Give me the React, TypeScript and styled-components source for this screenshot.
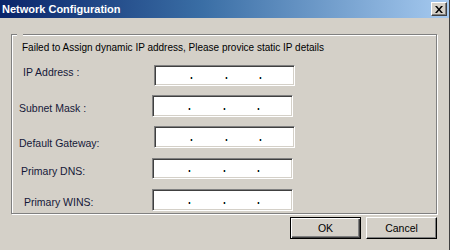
import React from 'react';
import styled, { createGlobalStyle } from 'styled-components';

const GlobalStyle = createGlobalStyle`
  html, body {
    margin: 0;
    padding: 0;
    background: #d4d0c8;
  }
  body {
    font-family: "Liberation Sans", Arial, sans-serif;
    font-size: 10.5px;
    color: #000;
  }
`;

// labelX / boxX are measured from the group box content edge
const fields = [
  { label: 'IP Address :', labelX: 11, labelY: 1, boxX: 142, gap: 11, height: 21 },
  { label: 'Subnet Mask :', labelX: 7, labelY: 7, boxX: 140, gap: 9, height: 22 },
  { label: 'Default Gateway:', labelX: 7, labelY: 11, boxX: 142, gap: 9, height: 22 },
  { label: 'Primary DNS:', labelX: 9, labelY: 7, boxX: 140, gap: 8, height: 21 },
  { label: 'Primary WINS:', labelX: 12, labelY: 7, boxX: 140, gap: 10, height: 22 },
];

export default function App() {
  return (
    <>
      <GlobalStyle />
      <Window>
        <TitleBar>
          <Title>Network Configuration</Title>
          <CloseButton>
            <svg width="8" height="7" viewBox="0 0 8 7">
              <path d="M0 0h2l2 2.5L6 0h2L5 3.5 8 7H6L4 4.5 2 7H0l3-3.5z" fill="#000" />
            </svg>
          </CloseButton>
        </TitleBar>
        <Body>
          <GroupBox>
            <LegendGap />
            <Message>Failed to Assign dynamic IP address, Please provice static IP details</Message>
            {fields.map((f) => (
              <FieldRow key={f.label} $gap={f.gap}>
                <Label $x={f.labelX} $y={f.labelY} $w={f.boxX}>
                  {f.label}
                </Label>
                <IpBox $h={f.height}>
                  <Octet />
                  <Dot />
                  <Octet />
                  <Dot />
                  <Octet />
                  <Dot />
                  <Octet />
                </IpBox>
              </FieldRow>
            ))}
          </GroupBox>
          <ButtonRow>
            <Button $default>OK</Button>
            <Button>Cancel</Button>
          </ButtonRow>
        </Body>
      </Window>
    </>
  );
}

const Window = styled.div`
  width: 450px;
  height: 250px;
  display: flex;
  flex-direction: column;
  background: #d4d0c8;
  box-sizing: border-box;
  border-right: 1px solid #404040;
  overflow: hidden;
`;

const TitleBar = styled.div`
  height: 18px;
  display: flex;
  align-items: center;
  justify-content: space-between;
  padding: 0 2px;
  background: linear-gradient(to right, #0a246a 0%, #3a6ea5 45%, #a6caf0 100%);
`;

const Title = styled.div`
  color: #fff;
  font-weight: bold;
  font-size: 11px;
  line-height: 18px;
`;

const CloseButton = styled.div`
  width: 16px;
  height: 14px;
  box-sizing: border-box;
  display: flex;
  align-items: center;
  justify-content: center;
  background: #d4d0c8;
  border-top: 1px solid #fff;
  border-left: 1px solid #fff;
  border-right: 1px solid #404040;
  border-bottom: 1px solid #404040;
  box-shadow: inset -1px -1px 0 #808080;
`;

const Body = styled.div`
  flex: 1;
  display: flex;
  flex-direction: column;
  padding: 16px 12px 0 11px;
`;

const GroupBox = styled.div`
  position: relative;
  height: 180px;
  box-sizing: border-box;
  border: 1px solid #808080;
  box-shadow: inset 1px 1px 0 #fff, 1px 1px 0 #fff;
  padding-top: 6px;
  display: flex;
  flex-direction: column;
`;

const LegendGap = styled.div`
  position: absolute;
  top: -1px;
  left: 5px;
  width: 6px;
  height: 2px;
  background: #d4d0c8;
`;

const Message = styled.div`
  font-size: 10px;
  line-height: 13px;
  padding-left: 10px;
`;

const FieldRow = styled.div<{ $gap: number }>`
  display: flex;
  align-items: flex-start;
  margin-top: ${(p) => p.$gap}px;
`;

const Label = styled.div<{ $x: number; $y: number; $w: number }>`
  flex: 0 0 ${(p) => p.$w}px;
  box-sizing: border-box;
  padding-left: ${(p) => p.$x}px;
  margin-top: ${(p) => p.$y}px;
  line-height: 13px;
  color: #141838;
`;

const IpBox = styled.div<{ $h: number }>`
  width: 141px;
  height: ${(p) => p.$h}px;
  box-sizing: border-box;
  background: #fff;
  border-top: 1px solid #808080;
  border-left: 1px solid #808080;
  border-right: 1px solid #fff;
  border-bottom: 1px solid #fff;
  box-shadow: inset 1px 1px 0 #404040, inset -1px -1px 0 #d4d0c8;
  display: flex;
  align-items: center;
  padding: 2px 0 0 2px;
`;

const Octet = styled.div`
  width: 33px;
`;

const Dot = styled.span`
  width: 1px;
  height: 2px;
  background: #101040;
  box-shadow: -1px 0 0 #f0b060, 1px 0 0 #80e0f0;
  margin: 3px 0 0 1px;
`;

const ButtonRow = styled.div`
  display: flex;
  justify-content: flex-end;
  gap: 5px;
  margin-top: 3px;
`;

const Button = styled.button<{ $default?: boolean }>`
  width: 71px;
  height: 22px;
  box-sizing: border-box;
  font-family: "Liberation Sans", Arial, sans-serif;
  font-size: 10.5px;
  color: #000;
  background: #d4d0c8;
  padding: 0;
  border-top: 1px solid ${(p) => (p.$default ? '#000' : '#fff')};
  border-left: 1px solid ${(p) => (p.$default ? '#000' : '#fff')};
  border-right: 1px solid #000;
  border-bottom: 1px solid #000;
  box-shadow: ${(p) =>
    p.$default
      ? 'inset 1px 1px 0 #fff, inset -1px -1px 0 #404040, inset -2px -2px 0 #808080'
      : 'inset -1px -1px 0 #808080'};
`;
